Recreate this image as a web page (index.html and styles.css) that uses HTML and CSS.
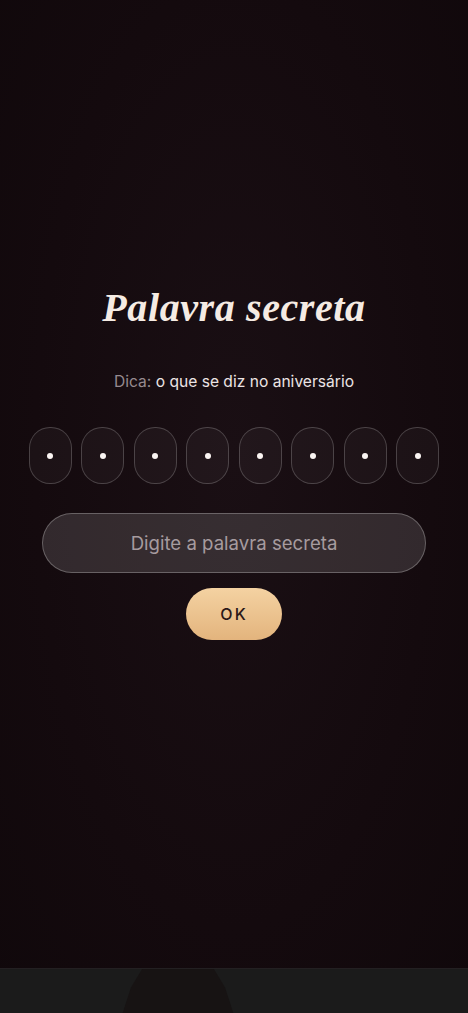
FILE: index.html
```html
<!DOCTYPE html>
<html lang="pt">
<head>
  <meta charset="UTF-8" />
  <meta name="viewport" content="width=device-width, initial-scale=1.0" />
  <title>Palavra secreta</title>
  <link rel="stylesheet" href="styles.css">
</head>
<body>

<main class="screen">
  <h1 class="title">Palavra secreta</h1>
  <p class="hint"><span class="hint-label">Dica:</span> o que se diz no aniversário</p>

  <div class="slots">
    <div class="slot"><span class="dot"></span></div>
    <div class="slot"><span class="dot"></span></div>
    <div class="slot"><span class="dot"></span></div>
    <div class="slot"><span class="dot"></span></div>
    <div class="slot"><span class="dot"></span></div>
    <div class="slot"><span class="dot"></span></div>
    <div class="slot"><span class="dot"></span></div>
    <div class="slot"><span class="dot"></span></div>
  </div>

  <input class="secret-input" type="text" placeholder="Digite a palavra secreta">
  <button class="btn-ok">OK</button>
</main>

<div class="bottom-bar">
  <div class="peek"></div>
</div>

</body>
</html>
```

FILE: styles.css
```css
* { box-sizing: border-box; }
html, body { height: 100%; }
body {
  margin: 0;
  font-family: Inter, 'Noto Sans', sans-serif;
  background: radial-gradient(ellipse at 50% 45%, #1a0f14 0%, #140a0e 60%, #10080b 100%);
  display: flex;
  flex-direction: column;
  overflow: hidden;
}
.screen {
  flex: 1;
  display: flex;
  flex-direction: column;
  align-items: center;
  padding-top: 283px;
}
.title {
  margin: 0;
  font-family: 'Liberation Serif', serif;
  font-style: italic;
  font-weight: bold;
  font-size: 40px;
  line-height: 50px;
  letter-spacing: 0.6px;
  color: #f5ebe3;
}
.hint {
  margin: 38px 0 0;
  font-size: 15.6px;
  line-height: 22px;
  color: #ece4e4;
}
.hint-label { color: #968a8f; }
.slots {
  display: flex;
  gap: 9.5px;
  margin-top: 34px;
}
.slot {
  width: 43px;
  height: 57px;
  border-radius: 21px;
  border: 1px solid rgba(255,255,255,0.2);
  background: rgba(255,255,255,0.035);
  display: flex;
  align-items: center;
  justify-content: center;
}
.dot {
  width: 6px;
  height: 6px;
  border-radius: 50%;
  background: #fbf5f3;
}
.secret-input {
  margin-top: 29px;
  width: 384px;
  height: 60px;
  border-radius: 30px;
  border: 1px solid rgba(255,255,255,0.26);
  background: rgba(255,255,255,0.13);
  color: #eee;
  font-family: inherit;
  font-size: 18.6px;
  text-align: center;
  outline: none;
}
.secret-input::placeholder { color: #a69b9f; }
.btn-ok {
  margin-top: 15px;
  width: 96px;
  height: 52px;
  border: none;
  border-radius: 26px;
  background: linear-gradient(180deg, #f4d2a2, #e3b47d);
  color: #2a1718;
  font-family: inherit;
  font-size: 16px;
  font-weight: 500;
  letter-spacing: 2px;
  cursor: pointer;
}
.bottom-bar {
  height: 45px;
  background: #1b1b1b;
  border-top: 1px solid #232022;
  position: relative;
  overflow: hidden;
}
.peek {
  position: absolute;
  left: 122px;
  top: 0;
  width: 112px;
  height: 46px;
  background: #171313;
  clip-path: polygon(18% 0, 82% 0, 92% 40%, 100% 100%, 0 100%, 8% 40%);
}
```
